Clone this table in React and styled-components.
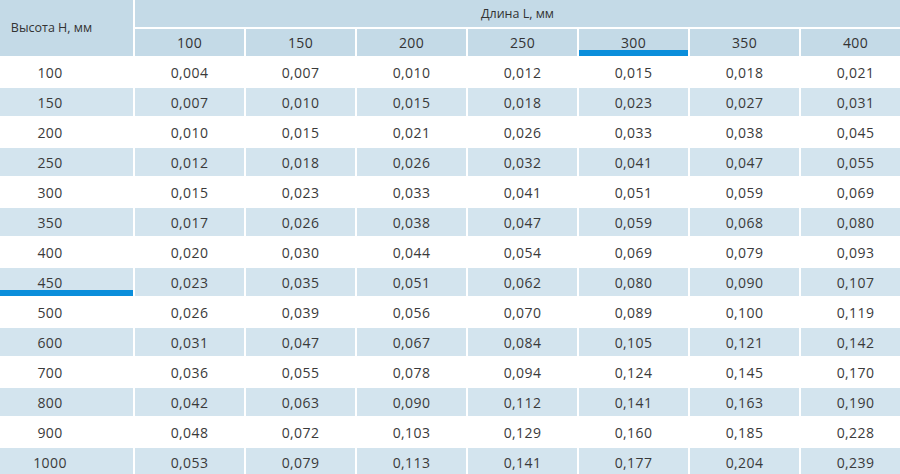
import React from 'react';
import styled, { createGlobalStyle } from 'styled-components';

const GlobalStyle = createGlobalStyle`
  html, body {
    margin: 0;
    padding: 0;
    background: #ffffff;
    overflow: hidden;
  }
  body {
    font-family: "Open Sans", "Noto Sans", "DejaVu Sans", sans-serif;
    color: #3a3a3a;
  }
`;

const lengths = [100, 150, 200, 250, 300, 350, 400];

const rows = [
  [100, '0,004', '0,007', '0,010', '0,012', '0,015', '0,018', '0,021'],
  [150, '0,007', '0,010', '0,015', '0,018', '0,023', '0,027', '0,031'],
  [200, '0,010', '0,015', '0,021', '0,026', '0,033', '0,038', '0,045'],
  [250, '0,012', '0,018', '0,026', '0,032', '0,041', '0,047', '0,055'],
  [300, '0,015', '0,023', '0,033', '0,041', '0,051', '0,059', '0,069'],
  [350, '0,017', '0,026', '0,038', '0,047', '0,059', '0,068', '0,080'],
  [400, '0,020', '0,030', '0,044', '0,054', '0,069', '0,079', '0,093'],
  [450, '0,023', '0,035', '0,051', '0,062', '0,080', '0,090', '0,107'],
  [500, '0,026', '0,039', '0,056', '0,070', '0,089', '0,100', '0,119'],
  [600, '0,031', '0,047', '0,067', '0,084', '0,105', '0,121', '0,142'],
  [700, '0,036', '0,055', '0,078', '0,094', '0,124', '0,145', '0,170'],
  [800, '0,042', '0,063', '0,090', '0,112', '0,141', '0,163', '0,190'],
  [900, '0,048', '0,072', '0,103', '0,129', '0,160', '0,185', '0,228'],
  [1000, '0,053', '0,079', '0,113', '0,141', '0,177', '0,204', '0,239'],
];

// выделенные строка и столбец
const activeHeight = 450;
const activeLength = 300;

const Table = styled.div`
  display: grid;
  width: 910px;
  grid-template-columns: 133px repeat(7, 109px);
  grid-template-rows: 27px 27px repeat(14, 28px);
  gap: 2px;
`;

const Cell = styled.div`
  display: flex;
  align-items: center;
  justify-content: center;
  font-size: 14px;
  letter-spacing: 0.4px;
  background: ${p => (p.$shaded ? '#d3e4ee' : '#ffffff')};
  box-shadow: ${p => (p.$active ? 'inset 0 -6px 0 #0b8edb' : 'none')};
`;

const HeadCell = styled(Cell)`
  background: #c4dae7;
  color: #333;
`;

const CornerCell = styled(HeadCell)`
  grid-row: span 2;
  font-size: 12.5px;
  letter-spacing: 0;
  padding-right: 30px;
  padding-bottom: 2px;
`;

const GroupCell = styled(HeadCell)`
  grid-column: span 7;
  font-size: 12.5px;
  letter-spacing: 0;
  padding-right: 10px;
`;

const RowLabel = styled(Cell)`
  padding-right: 33px;
`;

export default function App() {
  return (
    <>
      <GlobalStyle />
      <Table>
        <CornerCell>Высота H, мм</CornerCell>
        <GroupCell>Длина L, мм</GroupCell>
        {lengths.map(l => (
          <HeadCell key={l} $active={l === activeLength}>{l}</HeadCell>
        ))}
        {rows.map((r, i) => {
          const shaded = i % 2 === 1;
          return (
            <React.Fragment key={r[0]}>
              <RowLabel $shaded={shaded} $active={r[0] === activeHeight}>{r[0]}</RowLabel>
              {r.slice(1).map((v, j) => (
                <Cell key={j} $shaded={shaded}>{v}</Cell>
              ))}
            </React.Fragment>
          );
        })}
      </Table>
    </>
  );
}
